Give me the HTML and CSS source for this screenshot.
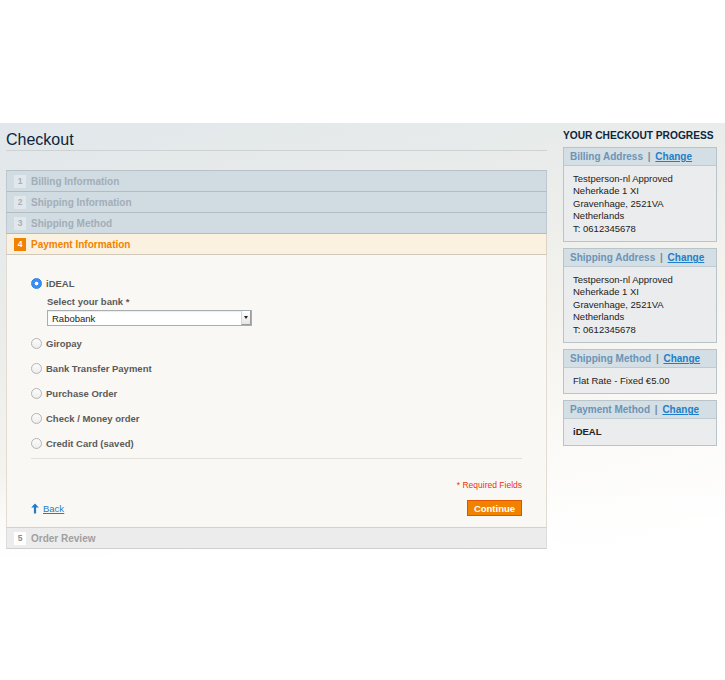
FILE: index.html
```html
<!DOCTYPE html>
<html lang="en">
<head>
    <meta charset="UTF-8">
    <meta name="viewport" content="width=device-width, initial-scale=1.0">
    <title>Checkout</title>
    <link rel="stylesheet" href="styles.css">
</head>
<body>

    <div class="page">
        <div class="main">
            <div class="page-title">
                <h1>Checkout</h1>
            </div>

            <ol class="opc">
                <li class="section">
                    <div class="step-title"><span class="number">1</span><h2>Billing Information</h2></div>
                </li>
                <li class="section">
                    <div class="step-title"><span class="number">2</span><h2>Shipping Information</h2></div>
                </li>
                <li class="section">
                    <div class="step-title"><span class="number">3</span><h2>Shipping Method</h2></div>
                </li>
                <li class="section active">
                    <div class="step-title"><span class="number">4</span><h2>Payment Information</h2></div>
                    <div class="step">
                        <ul class="methods">
                            <li class="method"><span class="radio checked"></span><label>iDEAL</label></li>
                            <li class="bank-field">
                                <label>Select your bank *</label>
                                <div class="select">
                                    <span class="select-value">Rabobank</span>
                                    <span class="select-arrow"></span>
                                </div>
                            </li>
                            <li class="method"><span class="radio"></span><label>Giropay</label></li>
                            <li class="method"><span class="radio"></span><label>Bank Transfer Payment</label></li>
                            <li class="method"><span class="radio"></span><label>Purchase Order</label></li>
                            <li class="method"><span class="radio"></span><label>Check / Money order</label></li>
                            <li class="method"><span class="radio"></span><label>Credit Card (saved)</label></li>
                        </ul>
                        <div class="buttons-set">
                            <p class="required">* Required Fields</p>
                            <div class="buttons-row">
                                <a class="back-link" href="#">
                                    <svg width="8" height="11" viewBox="0 0 8 11"><path d="M4 0.5 L7.8 4.6 H5.1 V10.5 H2.9 V4.6 H0.2 Z" fill="#1e7ec8"/></svg>
                                    <span>Back</span>
                                </a>
                                <button class="button">Continue</button>
                            </div>
                        </div>
                    </div>
                </li>
                <li class="section last">
                    <div class="step-title"><span class="number">5</span><h2>Order Review</h2></div>
                </li>
            </ol>
        </div>

        <div class="sidebar">
            <h2 class="progress-title">YOUR CHECKOUT PROGRESS</h2>

            <div class="block">
                <div class="block-title">Billing Address <span class="sep">|</span> <a href="#">Change</a></div>
                <div class="block-content">
                    Testperson-nl Approved<br>
                    Neherkade 1 XI<br>
                    Gravenhage, 2521VA<br>
                    Netherlands<br>
                    T: 0612345678
                </div>
            </div>

            <div class="block">
                <div class="block-title">Shipping Address <span class="sep">|</span> <a href="#">Change</a></div>
                <div class="block-content">
                    Testperson-nl Approved<br>
                    Neherkade 1 XI<br>
                    Gravenhage, 2521VA<br>
                    Netherlands<br>
                    T: 0612345678
                </div>
            </div>

            <div class="block">
                <div class="block-title">Shipping Method <span class="sep">|</span> <a href="#">Change</a></div>
                <div class="block-content">Flat Rate - Fixed €5.00</div>
            </div>

            <div class="block">
                <div class="block-title">Payment Method <span class="sep">|</span> <a href="#">Change</a></div>
                <div class="block-content"><strong>iDEAL</strong></div>
            </div>
        </div>
    </div>

</body>
</html>
```

FILE: styles.css
```css
* { margin: 0; padding: 0; box-sizing: border-box; font-family: 'Liberation Sans', Arial, sans-serif; }
body {
    background: #fff;
    color: #2f2f2f;
}
.page {
    margin-top: 123px;
    padding: 0 8px 12px 6px;
    display: flex;
    gap: 16px;
    background:
        linear-gradient(to bottom, rgba(255, 255, 255, 0) 80%, #fff 100%),
        linear-gradient(165deg, #e1e7eb 0%, #e9ecea 30%, #f5f3ee 55%, #fcfbf9 78%, #ffffff 100%);
}
.main {
    width: 541px;
}
.page-title {
    padding-top: 7px;
    padding-bottom: 1px;
    border-bottom: 1px solid #cdd2d5;
}
.page-title h1 {
    font-size: 16px;
    line-height: 19px;
    font-weight: normal;
    color: #0a263c;
}

/* One page checkout accordion */
.opc {
    list-style: none;
    margin-top: 19px;
    border-top: 1px solid #b7c1c7;
}
.step-title {
    display: flex;
    align-items: center;
    height: 21px;
    padding-left: 7px;
    background: #d0dbe2;
    border-left: 1px solid #bfc8ce;
    border-right: 1px solid #bfc8ce;
    border-bottom: 1px solid #b2bcc3;
}
.step-title h2 {
    font-size: 10px;
    font-weight: bold;
    color: #a2aeb7;
}
.number {
    width: 12px;
    height: 13px;
    margin-right: 5px;
    background: #e1e7eb;
    color: #a5b0b8;
    font-size: 8.5px;
    font-weight: bold;
    line-height: 13px;
    text-align: center;
}
.active .step-title {
    background: #fbf1e1;
    border-color: #dcd3c6;
    border-bottom-color: #d2c9bd;
}
.active .step-title h2 {
    color: #f18200;
}
.active .number {
    background: #f18200;
    color: #fff;
}
.last .step-title {
    background: #ececec;
    border-color: #dcdcdc;
    border-bottom-color: #cfcfcf;
}
.last .step-title h2 {
    color: #a0a0a0;
}
.last .number {
    background: #fff;
    color: #8a8a8a;
}

.step {
    background: #faf8f4;
    border-left: 1px solid #e2dbd1;
    border-right: 1px solid #e2dbd1;
    border-bottom: 1px solid #d8d0c5;
    padding: 16px 24px 11px 24px;
    height: 273px;
}
.methods {
    list-style: none;
    border-bottom: 1px solid #e3e0da;
    padding-bottom: 2px;
}
.method {
    display: flex;
    align-items: center;
    height: 25px;
}
.method label {
    font-size: 9.5px;
    font-weight: bold;
    color: #5a5a5a;
    margin-left: 4px;
}
.radio {
    width: 11px;
    height: 11px;
    border-radius: 50%;
    border: 1px solid #b4b4b4;
    background: linear-gradient(#fcfcfc, #ededed);
}
.radio.checked {
    border-color: #2f7fe6;
    background: radial-gradient(circle, #fff 0 1.6px, #3b8ef0 2.2px);
}
.bank-field {
    padding-left: 16px;
    padding-bottom: 5px;
}
.bank-field label {
    display: block;
    font-size: 9.5px;
    font-weight: bold;
    color: #5a5a5a;
    line-height: 12px;
    margin-bottom: 2px;
}
.select {
    width: 205px;
    height: 16px;
    display: flex;
    align-items: center;
    justify-content: space-between;
    background: #fff;
    border: 1px solid #a9aeb3;
    box-shadow: inset 0 1px 1px rgba(0, 0, 0, 0.08);
}
.select-value {
    font-size: 9.5px;
    color: #222;
    padding-left: 4px;
}
.select-arrow {
    position: relative;
    width: 10px;
    height: 14px;
    border-left: 1px solid #d6d6d6;
    border-right: 1px solid #9c9c9c;
    border-bottom: 1px solid #9c9c9c;
    background: linear-gradient(#ffffff, #e6e6e6);
}
.select-arrow::after {
    content: "";
    position: absolute;
    left: 2px;
    top: 5px;
    border-left: 2.5px solid transparent;
    border-right: 2.5px solid transparent;
    border-top: 3px solid #222;
}

.buttons-set {
    text-align: right;
}
.required {
    margin-top: 20px;
    font-size: 8.5px;
    line-height: 12px;
    color: #eb340a;
}
.buttons-row {
    display: flex;
    justify-content: space-between;
    align-items: center;
    margin-top: 9px;
}
.back-link {
    display: flex;
    align-items: center;
    gap: 4px;
    font-size: 9.5px;
    color: #1e7ec8;
}
.back-link span {
    text-decoration: underline;
}
.button {
    width: 55px;
    height: 16px;
    background: #f18200;
    border: 1px solid #de5400;
    color: #fff;
    font-size: 9.5px;
    font-weight: bold;
    cursor: pointer;
}

/* Sidebar progress */
.sidebar {
    width: 154px;
}
.progress-title {
    padding-top: 7px;
    font-size: 10.2px;
    line-height: 12px;
    font-weight: bold;
    color: #0a263c;
    margin-bottom: 5px;
}
.block {
    border: 1px solid #b8c3ca;
    margin-bottom: 6px;
    background: #ebeced;
}
.block-title {
    height: 18px;
    padding-left: 6px;
    line-height: 17px;
    background: #d3dee5;
    border-bottom: 1px solid #c0cad1;
    font-size: 10px;
    font-weight: bold;
    color: #6e93b4;
}
.block-title .sep {
    color: #7d8b96;
    margin: 0 2px;
}
.block-title a {
    color: #1e7ec8;
}
.block-content {
    padding: 7px 9px 6px 9px;
    font-size: 9.5px;
    line-height: 12.4px;
    color: #222;
}
.block-content strong {
    display: block;
}
```
